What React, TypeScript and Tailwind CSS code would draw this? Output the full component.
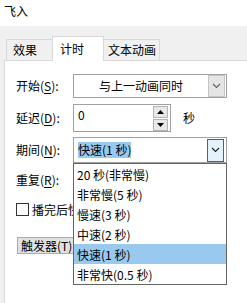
import React from "react";

const font = { fontFamily: '"Noto Sans CJK SC", "Noto Sans", sans-serif' };

function U({ c }: { c: string }) {
  return <span className="underline underline-offset-[2px] decoration-1">{c}</span>;
}

function Chevron({ color = "#606060" }: { color?: string }) {
  return (
    <svg width="9" height="6" viewBox="0 0 9 6">
      <polyline points="1,1 4.5,4.5 8,1" fill="none" stroke={color} strokeWidth="1.1" />
    </svg>
  );
}

const items = ["20 秒(非常慢)", "非常慢(5 秒)", "慢速(3 秒)", "中速(2 秒)", "快速(1 秒)", "非常快(0.5 秒)"];

export default function App() {
  return (
    <div
      className="w-[247px] h-[303px] bg-[#f0f0f0] overflow-hidden flex flex-col text-[12px] text-black"
      style={font}
    >
      <div className="h-[26px] bg-white pl-[4px] pt-[3px] leading-[16px] shrink-0">飞入</div>
      <div className="h-[34px] flex items-end pl-[6px] shrink-0">
        <div className="h-[21px] w-[46px] border-t border-l border-[#d9d9d9] flex items-center pl-[6px] leading-[16px]">
          效果
        </div>
        <div className="h-[25px] w-[52px] border-t border-l border-r border-[#d9d9d9] bg-white flex items-center pl-[7px] pb-[1px] leading-[16px] relative z-10 mb-[-1px]">
          计时
        </div>
        <div className="h-[21px] w-[56px] border-t border-r border-[#d9d9d9] flex items-center pl-[4px] leading-[16px]">
          文本动画
        </div>
      </div>
      <div className="flex-1 ml-[4px] border-l border-t border-[#d9d9d9] bg-white pl-[11px] flex flex-col leading-[16px]">
        <div className="mt-[13px] h-[24px] flex items-center">
          <div className="w-[57px]">开始(<U c="S" />):</div>
          <div className="w-[154px] h-[24px] border border-[#a0a0a0] flex items-center">
            <div className="flex-1 text-center">与上一动画同时</div>
            <div className="w-[17px] h-[22px] mr-[1px] bg-[#e5e5e5] border border-[#c4c4c4] flex items-center justify-center">
              <Chevron />
            </div>
          </div>
        </div>
        <div className="mt-[6px] h-[28px] flex items-center">
          <div className="w-[57px]">延迟(<U c="D" />):</div>
          <div className="w-[98px] h-[28px] border border-[#a0a0a0] flex">
            <div className="flex-1 pl-[4px] pt-[2px]">0</div>
            <div className="flex flex-col gap-[1px] mt-[1px] mr-[2px]">
              <div className="w-[15px] h-[12px] bg-[#e8e8e8] border border-[#b4b4b4] flex items-center justify-center">
                <svg width="7" height="4" viewBox="0 0 7 4"><polygon points="0,4 3.5,0 7,4" fill="#000" /></svg>
              </div>
              <div className="w-[15px] h-[12px] bg-[#e8e8e8] border border-[#b4b4b4] flex items-center justify-center">
                <svg width="7" height="4" viewBox="0 0 7 4"><polygon points="0,0 3.5,4 7,0" fill="#000" /></svg>
              </div>
            </div>
          </div>
          <div className="ml-[12px]">秒</div>
        </div>
        <div className="mt-[5px] h-[26px] flex items-center">
          <div className="w-[57px]">期间(<U c="N" />):</div>
          <div className="relative w-[154px] h-[26px] border border-[#a0a0a0] flex items-center">
            <div className="flex-1 pl-[4px]">
              <span className="bg-[#99c9ef] inline-block h-[16px] leading-[16px]">快速(1 秒)</span>
            </div>
            <div className="w-[17px] h-[23px] mr-[2px] bg-[#e5f1fb] border border-[#0078d7] flex items-center justify-center">
              <Chevron color="#202020" />
            </div>
            <div className="absolute left-[-1px] top-[25px] w-[154px] h-[122px] border border-[#646464] bg-white z-20 flex flex-col">
              {items.map((t, i) => (
                <div
                  key={t}
                  className={
                    "h-[20px] pl-[3px] flex items-center pt-[2px] " + (i === 4 ? "bg-[#99c9ef]" : "")
                  }
                >
                  {t}
                </div>
              ))}
            </div>
          </div>
        </div>
        <div className="mt-[7px] h-[20px] flex items-center">
          <div className="w-[57px]">重复(<U c="R" />):</div>
        </div>
        <div className="mt-[13px] h-[13px] flex items-center">
          <div className="w-[13px] h-[13px] border border-[#333333] bg-white shrink-0" />
          <div className="ml-[3px] w-[41px] overflow-hidden whitespace-nowrap">播完后快退(W)</div>
        </div>
        <div className="mt-[21px] w-[57px] h-[17px] bg-[#e1e1e1] border-l border-t border-b border-[#adadad] flex items-center pl-[3px] ml-[1px] whitespace-nowrap overflow-hidden">
          触发器(<U c="T" />)
        </div>
      </div>
    </div>
  );
}
